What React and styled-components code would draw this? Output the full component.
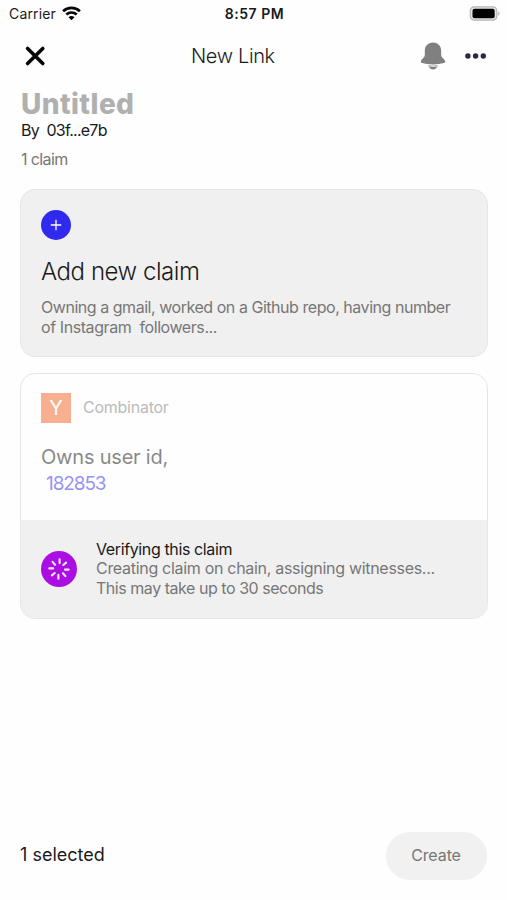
import styled, { createGlobalStyle } from "styled-components"

const GlobalStyle = createGlobalStyle`
  * {
    box-sizing: border-box;
  }

  body {
    margin: 0;
    background: #FEFEFE;
    font-family: Inter, "Liberation Sans", sans-serif;
  }
`

const Screen = styled.main`
  display: flex;
  flex-direction: column;
  width: 507px;
  height: 900px;
  overflow: hidden;
  background: #FEFEFE;
`

const StatusBar = styled.div`
  display: grid;
  grid-template-columns: 1fr auto 1fr;
  align-items: center;
  height: 28px;
  padding: 0 7px 1px 9px;
  color: #111111;
`

const Carrier = styled.div`
  display: flex;
  align-items: center;
  gap: 6px;
`

const Text = styled.span`
  display: block;
  margin: 0;
  white-space: pre;
  font-size: ${({ $size }) => $size}px;
  line-height: ${({ $line }) => $line}px;
  font-weight: ${({ $weight }) => $weight || 400};
  letter-spacing: ${({ $spacing }) => $spacing || 0}px;
  color: ${({ $color }) => $color || "#1A1A1A"};
`

const Battery = styled.svg`
  justify-self: end;
`

const Header = styled.header`
  display: grid;
  grid-template-columns: 167px 1fr auto;
  align-items: center;
  height: 56px;
  padding: 0 20px 0 24px;
`

const IconButton = styled.button`
  display: flex;
  padding: 0;
  border: 0;
  background: none;
`

const Actions = styled.div`
  display: flex;
  align-items: center;
  justify-content: flex-end;
  gap: 19px;
`

const Intro = styled.section`
  padding: 4px 21px 0;
`

const Claims = styled.section`
  display: flex;
  flex-direction: column;
  gap: 16px;
  padding: 11px 19px 0 20px;
`

const Card = styled.article`
  height: ${({ $height }) => $height}px;
  border: 1px solid #E6E6E6;
  border-radius: 15px;
  overflow: hidden;
  background: ${({ $filled }) => ($filled ? "#F0F0F0" : "#FEFEFE")};
`

const CardBody = styled.div`
  height: ${({ $height }) => $height}px;
  padding: ${({ $top }) => $top || 20}px 20px 0;
  opacity: ${({ $faded }) => ($faded ? 0.5 : 1)};
`

const Circle = styled.div`
  display: flex;
  align-items: center;
  justify-content: center;
  flex: none;
  width: ${({ $size }) => $size}px;
  height: ${({ $size }) => $size}px;
  border-radius: 50%;
  background: ${({ $color }) => $color};
`

const AddTitle = styled(Text)`
  margin-top: 16px;
`

const AddDetails = styled.div`
  margin-top: 9px;
`

const Provider = styled.div`
  display: flex;
  align-items: flex-start;
  gap: 12px;
  height: 30px;
`

const ProviderLogo = styled.div`
  display: flex;
  align-items: center;
  justify-content: center;
  width: 30px;
  height: 30px;
  background: #F26522;
`

const ProviderName = styled(Text)`
  padding-top: 4px;
`

const ClaimText = styled.div`
  margin-top: 21px;
`

const ClaimValue = styled(Text)`
  padding-left: 5px;
`

const Progress = styled.div`
  display: flex;
  align-items: center;
  gap: 19px;
  height: 98px;
  padding: 0 20px 1px;
  background: #F0F0F0;
`

const Footer = styled.footer`
  display: flex;
  align-items: center;
  justify-content: space-between;
  margin-top: auto;
  padding: 0 20px 20px;
`

const Selection = styled(Text)`
  padding-bottom: 3px;
`

const CreateButton = styled.button`
  display: flex;
  align-items: center;
  justify-content: center;
  width: 101px;
  height: 48px;
  padding: 0 1px 2px 0;
  border: 0;
  border-radius: 24px;
  background: #F1F1F1;
  font-family: inherit;
`

function WifiIcon() {
    return (
        <svg width="19" height="15" viewBox="0 0 19 15" fill="none" stroke="#080808" strokeWidth="2.7">
            <path d="M1.1 5.2C5.8 .7 13.2 .7 17.9 5.2" />
            <path d="M4.3 8.6c3-2.8 7.4-2.8 10.4 0" />
            <path d="M9.5 14.2 6.5 11.2c1.7-1.6 4.3-1.6 6 0z" fill="#080808" stroke="none" />
        </svg>
    )
}

function BatteryIcon() {
    return (
        <Battery width="31" height="15" viewBox="0 0 31 15">
            <rect x="1.3" y=".8" width="26.5" height="13.4" rx="4" fill="#E6E6E6" stroke="#B5B5B5" strokeWidth="1.2" />
            <rect x="3.5" y="2.8" width="22.2" height="9.4" rx="2" fill="#000000" />
            <path d="M29.3 5.1q2.4 2.4 0 4.8z" fill="#AAAAAA" />
        </Battery>
    )
}

function CloseIcon() {
    return (
        <svg width="22" height="22" viewBox="0 0 22 22" stroke="#050505" strokeWidth="3.6" strokeLinecap="round">
            <path d="m3.6 3.4 15.2 15.2M18.8 3.4 3.6 18.6" />
        </svg>
    )
}

function BellIcon() {
    return (
        <svg width="26" height="28" viewBox="0 0 26 28" fill="#808080">
            <path d="M13 .5C7.8.5 4.8 4.1 4.8 9v3.8c0 1.8-.9 2.7-2.5 4.1C.4 18.5.2 20.5 2.1 21.1c5.9 1.8 15.9 1.8 21.8 0 1.9-.6 1.7-2.6-.2-4.2-1.6-1.4-2.5-2.3-2.5-4.1V9C21.2 4.1 18.2.5 13 .5z" />
            <path d="M8.3 23.3q4.7.7 9.4 0c-.5 2.5-2.3 4.2-4.7 4.2s-4.2-1.7-4.7-4.2z" />
            <path d="M8.5 24.2q4.5.7 9 0" fill="none" stroke="#D5D5D5" strokeWidth="1" />
        </svg>
    )
}

function MoreIcon() {
    return (
        <svg width="22" height="6" viewBox="0 0 22 6" fill="#2B2840">
            <circle cx="2.9" cy="3" r="2.7" />
            <circle cx="10.6" cy="3" r="2.7" />
            <circle cx="18.3" cy="3" r="2.7" />
        </svg>
    )
}

function SpinnerIcon() {
    return (
        <svg width="24" height="24" viewBox="0 0 24 24" stroke="#FBE9FF" strokeWidth="2.1" strokeLinecap="round">
            <path d="M12.6 2.3v3.8M11.4 17.9v3.8M2.3 11.4h3.8M17.9 12.6h3.8M5.6 4.9l2.4 2.8M16 16.3l2.4 2.8M4.9 18.4l2.8-2.4M16.300 8l2.800-2.400" />
        </svg>
    )
}

function AddClaimCard() {
    return (
        <Card $height={168} $filled>
            <CardBody $height={166}>
                <Circle $size={30} $color="#3029EE">
                    <svg width="12" height="12" viewBox="0 0 12 12" stroke="#FFFFFF" strokeWidth="1.3">
                        <path d="M6 .8v10.4M.8 6h10.4" />
                    </svg>
                </Circle>
                <AddTitle as="h2" $size={24} $line={32} $weight={350} $spacing={-0.45}>Add new claim</AddTitle>
                <AddDetails>
                    <Text $size={16} $line={20} $spacing={-0.46} $color="#777777">Owning a gmail, worked on a Github repo, having number</Text>
                    <Text $size={16} $line={20} $spacing={-0.42} $color="#777777">of Instagram  followers...</Text>
                </AddDetails>
            </CardBody>
        </Card>
    )
}

function ClaimCard({ provider, claim, value }) {
    return (
        <Card $height={246}>
            <CardBody $height={146} $top={19} $faded>
                <Provider>
                    <ProviderLogo>
                        <Text $size={20} $line={30} $color="#FFFFFF">Y</Text>
                    </ProviderLogo>
                    <ProviderName $size={16} $line={20} $spacing={-0.25} $color="#777777">{provider}</ProviderName>
                </Provider>
                <ClaimText>
                    <Text $size={20} $line={26} $spacing={-0.2} $color="#111111">{claim}</Text>
                    <ClaimValue $size={19} $line={27} $spacing={-1.1} $color="#3029EE">{value}</ClaimValue>
                </ClaimText>
            </CardBody>
            <Progress>
                <Circle $size={36} $color="#AA0EE2">
                    <SpinnerIcon />
                </Circle>
                <div>
                    <Text $size={16} $line={20} $spacing={-0.38}>Verifying this claim</Text>
                    <Text $size={16} $line={19} $spacing={-0.3} $color="#777777">Creating claim on chain, assigning witnesses...</Text>
                    <Text $size={16} $line={20} $spacing={-0.46} $color="#777777">This may take up to 30 seconds</Text>
                </div>
            </Progress>
        </Card>
    )
}

function App() {
    return (
        <Screen>
            <GlobalStyle />
            <StatusBar>
                <Carrier>
                    <Text $size={14} $line={18} $spacing={0.15}>Carrier</Text>
                    <WifiIcon />
                </Carrier>
                <Text $size={14} $line={18} $weight={600} $spacing={0.5}>8:57 PM</Text>
                <BatteryIcon />
            </StatusBar>
            <Header>
                <IconButton aria-label="Close"><CloseIcon /></IconButton>
                <Text $size={20} $line={28} $weight={350} $spacing={-0.35}>New Link</Text>
                <Actions>
                    <IconButton aria-label="Notifications"><BellIcon /></IconButton>
                    <IconButton aria-label="More"><MoreIcon /></IconButton>
                </Actions>
            </Header>
            <Intro>
                <Text $size={28} $line={32} $weight={800} $spacing={0.4} $color="#B0B0B0">Untitled</Text>
                <Text $size={16} $line={20} $spacing={-0.75}>By  03f...e7b</Text>
                <Text $size={16} $line={38} $spacing={-0.6} $color="#777777">1 claim</Text>
            </Intro>
            <Claims>
                <AddClaimCard />
                <ClaimCard provider="Combinator" claim="Owns user id," value="182853" />
            </Claims>
            <Footer>
                <Selection $size={18} $line={24}>1 selected</Selection>
                <CreateButton>
                    <Text $size={16} $line={20} $spacing={-0.1} $color="#777777">Create</Text>
                </CreateButton>
            </Footer>
        </Screen>
    )
}

export default App
